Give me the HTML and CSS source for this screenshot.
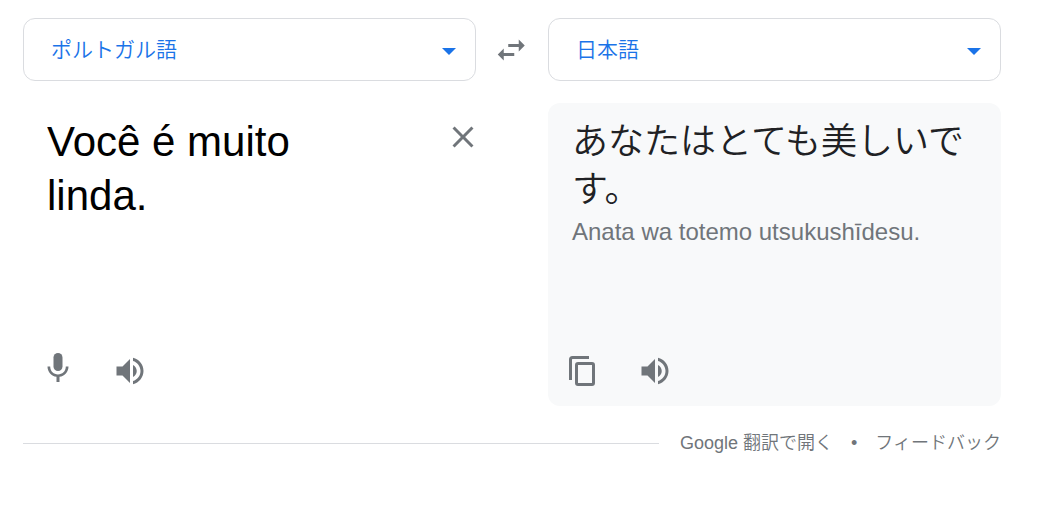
FILE: index.html
```html
<!DOCTYPE html>
<html lang="ja">

<head>
    <meta charset="utf-8" />
    <meta name="viewport" content="width=device-width, initial-scale=1" />
    <title>Google 翻訳</title>

    <link rel="stylesheet" href="styles.css">
</head>

<body>
    <main class="translator">
        <div class="languages">
            <div class="picker">
                <select class="language" aria-label="翻訳元の言語">
                    <option selected="selected">ポルトガル語</option>
                    <option>日本語</option>
                    <option>英語</option>
                </select>
                <svg class="arrow" viewBox="0 0 14 7"><path d="M0 0h14L7 7z" /></svg>
            </div>
            <button class="icon-btn swap" type="button" aria-label="言語を入れ替える">
                <svg class="icon" viewBox="0 0 24 24"><path d="M6.500 11L2.500 15l4 4v-3H13.500v-2H6.500v-3zM20.500 9l-4-4v3H9.500v2h7v3l4-4z" /></svg>
            </button>
            <div class="picker">
                <select class="language" aria-label="翻訳先の言語">
                    <option selected="selected">日本語</option>
                    <option>ポルトガル語</option>
                    <option>英語</option>
                </select>
                <svg class="arrow" viewBox="0 0 14 7"><path d="M0 0h14L7 7z" /></svg>
            </div>
        </div>

        <div class="panels">
            <section class="panel source">
                <div class="entry">
                    <textarea class="source-text" aria-label="原文" rows="3" spellcheck="false">Você é muito linda.</textarea>
                    <button class="icon-btn close" type="button" aria-label="原文を消去">
                        <svg class="icon-small" viewBox="4 4 16 16"><path d="M19 6.41L17.59 5 12 10.59 6.41 5 5 6.41 10.59 12 5 17.59 6.41 19 12 13.41 17.59 19 19 17.59 13.41 12z" /></svg>
                    </button>
                </div>
                <div class="tools">
                    <button class="icon-btn" type="button" aria-label="音声入力">
                        <svg class="icon" viewBox="0 0 36 36">
                            <rect x="13.500" y="0" width="9" height="18" rx="4.500" />
                            <path d="M7.500 13.500h2.700c0 5 3.600 7.900 7.800 7.900s7.800-2.900 7.800-7.900h2.700c0 5.400-4 9.600-9 10.300V29h-3v-5.200c-5-.7-9-4.900-9-10.300z" />
                        </svg>
                    </button>
                    <button class="icon-btn" type="button" aria-label="原文を聞く">
                        <svg class="icon" viewBox="0 0 24 24"><path d="M3 9v6h4l5 5V4L7 9H3zm13.500 3c0-1.770-1.020-3.290-2.500-4.030v8.050c1.480-.730 2.500-2.250 2.500-4.020zM14 3.230v2.060c2.890.860 5 3.540 5 6.710s-2.110 5.850-5 6.710v2.060c4.010-.910 7-4.490 7-8.770s-2.990-7.860-7-8.770z" /></svg>
                    </button>
                </div>
            </section>

            <section class="panel result">
                <div class="output">
                    <p class="translation">あなたはとても美しいです。</p>
                    <p class="reading">Anata wa totemo utsukushīdesu.</p>
                </div>
                <div class="tools">
                    <button class="icon-btn" type="button" aria-label="コピー">
                        <svg class="icon" viewBox="0 0 36 36">
                            <path class="line" d="M5.500 27V6.500q0-2 2-2H24" />
                            <rect class="line" x="11.500" y="10.500" width="17" height="21" rx="1.500" />
                        </svg>
                    </button>
                    <button class="icon-btn" type="button" aria-label="訳文を聞く">
                        <svg class="icon" viewBox="0 0 24 24"><path d="M3 9v6h4l5 5V4L7 9H3zm13.500 3c0-1.770-1.020-3.290-2.500-4.030v8.050c1.480-.730 2.500-2.250 2.500-4.020zM14 3.230v2.060c2.890.860 5 3.540 5 6.710s-2.110 5.850-5 6.710v2.060c4.010-.910 7-4.490 7-8.770s-2.990-7.860-7-8.770z" /></svg>
                    </button>
                </div>
            </section>
        </div>

        <footer class="footer">
            <hr class="rule">
            <nav class="links">
                <a href="#">Google 翻訳で開く</a>
                <span>•</span>
                <a href="#">フィードバック</a>
            </nav>
        </footer>
    </main>
</body>

</html>
```
FILE: styles.css
```css
* {
    box-sizing: border-box;
}

body {
    margin: 0;
    background-color: #fff;
    color: #202124;
    font-family: "Liberation Sans", "Noto Sans CJK JP", sans-serif;
    font-weight: 350;
}

.translator {
    padding: 18px 36px 18px 23px;
}

.languages {
    display: grid;
    grid-template-columns: minmax(0, 1fr) 72px minmax(0, 1fr);
    align-items: center;
}

.picker {
    display: grid;
    align-items: center;
}

.picker > * {
    grid-area: 1 / 1;
}

.language {
    appearance: none;
    width: 100%;
    height: 63px;
    padding: 0 48px 0 27px;
    border: 1px solid #dadce0;
    border-radius: 12px;
    background-color: #fff;
    color: #1a73e8;
    font: inherit;
    font-size: 21px;
}

.arrow {
    width: 14px;
    height: 7px;
    margin: 3px 20px 0 0;
    justify-self: end;
    fill: #1a73e8;
    pointer-events: none;
}

.icon-btn {
    display: flex;
    padding: 0;
    border: none;
    background: none;
    cursor: pointer;
}

.icon-btn svg {
    fill: #70757a;
}

.swap {
    justify-self: center;
}

.icon {
    width: 36px;
    height: 36px;
}

.icon-small {
    width: 24px;
    height: 24px;
}

.icon .line {
    fill: none;
    stroke: #70757a;
    stroke-width: 3px;
}

.panels {
    display: grid;
    grid-template-columns: repeat(2, minmax(0, 1fr));
    gap: 72px;
    margin-top: 22px;
}

.panel {
    display: flex;
    flex-direction: column;
    justify-content: space-between;
    min-height: 303px;
    padding-bottom: 17px;
    border-radius: 12px;
}

.entry {
    display: flex;
    align-items: flex-start;
    gap: 66px;
    padding: 12px 1px 0 24px;
}

.source-text {
    flex: 1;
    min-width: 0;
    padding: 0;
    border: none;
    outline: none;
    resize: none;
    overflow: hidden;
    background: none;
    color: #000;
    font: inherit;
    font-size: 42px;
    line-height: 54px;
}

.close {
    margin-top: 10px;
}

.result {
    background-color: #f8f9fa;
}

.output {
    padding: 15px 24px 0;
}

.output p {
    margin: 0;
}

.translation {
    font-size: 36px;
    line-height: 48px;
}

.reading {
    color: #70757a;
    font-size: 24px;
    line-height: 36px;
}

.tools {
    display: flex;
    gap: 36px;
    padding: 0 17px;
}

.footer {
    display: flex;
    align-items: center;
    gap: 21px;
    margin-top: 24px;
}

.rule {
    flex: 1;
    margin: 0;
    border: none;
    border-top: 1px solid #dadce0;
}

.links {
    display: flex;
    gap: 18px;
    color: #70757a;
    font-size: 18px;
    line-height: 27px;
}

.links a {
    color: inherit;
    text-decoration: none;
}
```
